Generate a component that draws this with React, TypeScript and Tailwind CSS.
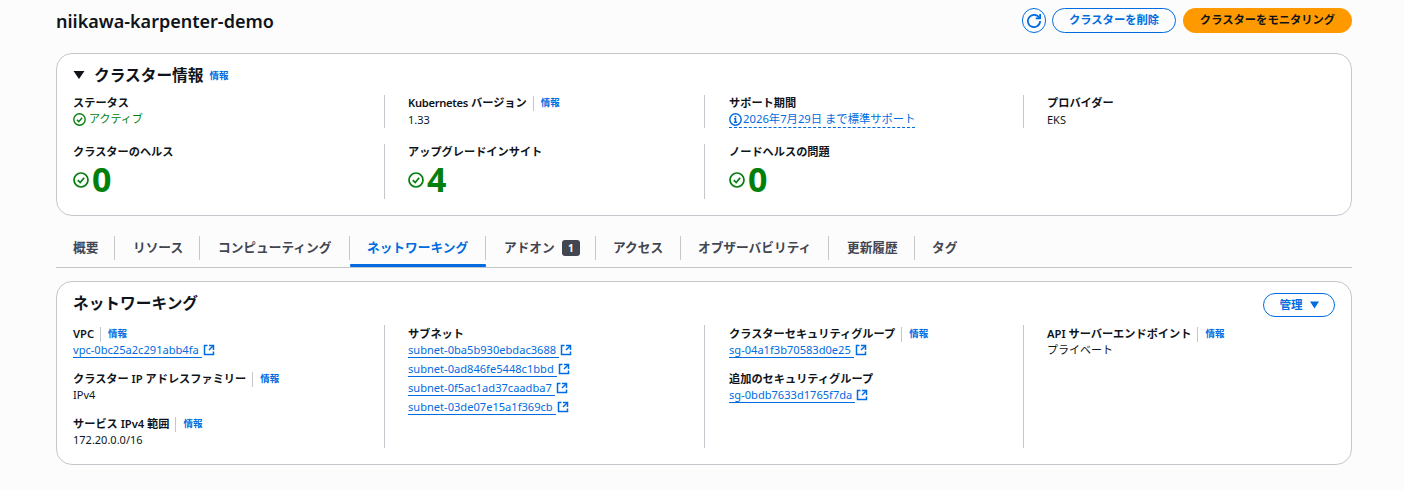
import type { ReactNode } from 'react'

const font = { fontFamily: '"Noto Sans", "Noto Sans CJK JP", sans-serif' }

const CheckIcon = ({ size }: { size: number }) => (
  <svg width={size} height={size} viewBox="0 0 16 16" fill="none" stroke="#037f0c" strokeWidth="1.7" className="shrink-0">
    <circle cx="8" cy="8" r="7" />
    <path d="M4.8 8.2 7.2 10.6 11.2 5.8" />
  </svg>
)

const ExternalIcon = () => (
  <svg width="12" height="12" viewBox="0 0 16 16" fill="none" stroke="#006ce0" strokeWidth="2" className="ml-px shrink-0">
    <path d="M14 8.01v-6H8" />
    <path d="M14.02 2 8 8" />
    <path d="M6 2H2v12h12v-4" />
  </svg>
)

const Info = () => <span className="text-[9.5px] font-semibold text-[#006ce0]">情報</span>

const Label = ({ children, info }: { children: ReactNode; info?: boolean }) => (
  <div className="flex h-[16px] items-center text-[11.2px] leading-[16px] font-semibold text-[#0f141a]">
    <span>{children}</span>
    {info && (
      <>
        <span className="mr-[7px] ml-[6px] h-[15px] w-px bg-[#c6c6cd]" />
        <Info />
      </>
    )}
  </div>
)

const Value = ({ children }: { children: ReactNode }) => (
  <div className="h-[16px] text-[11px] leading-[16px] text-[#0f141a]">{children}</div>
)

const ExtLink = ({ children }: { children: string }) => (
  <div className="flex h-[16px] items-center">
    <a className="border-b border-[#006ce0] pr-[3px] text-[11.1px] leading-[15px] whitespace-nowrap text-[#006ce0]">{children}</a>
    <ExternalIcon />
  </div>
)

const Stat = ({ value }: { value: string }) => (
  <div className="mt-[4px] flex h-[30px] items-center gap-[3px]">
    <span className="mt-[1px]"><CheckIcon size={16} /></span>
    <span className="text-[34px] leading-[30px] font-bold text-[#037f0c]">{value}</span>
  </div>
)

const tabs: { name: string; w: string; pl: string; active?: boolean; badge?: string }[] = [
  { name: '概要', w: 'w-[59px]', pl: 'pl-[17px]' },
  { name: 'リソース', w: 'w-[85px]', pl: 'pl-[18px]' },
  { name: 'コンピューティング', w: 'w-[150px]', pl: 'pl-[18px]' },
  { name: 'ネットワーキング', w: 'w-[136px]', pl: 'pl-[17px]', active: true },
  { name: 'アドオン', w: 'w-[110px]', pl: 'pl-[18px]', badge: '1' },
  { name: 'アクセス', w: 'w-[85px]', pl: 'pl-[17px]' },
  { name: 'オブザーバビリティ', w: 'w-[148px]', pl: 'pl-[17px]' },
  { name: '更新履歴', w: 'w-[86px]', pl: 'pl-[18px]' },
  { name: 'タグ', w: 'w-[60px]', pl: 'pl-[17px]' },
]

export default function App() {
  return (
    <div className="min-h-[490px] bg-[#fcfcfd] pt-[8px] pr-[52px] pl-[56px]" style={font}>
      {/* header */}
      <div className="flex h-[25px] items-center justify-between">
        <h1 className="mt-[2px] text-[18px] leading-[25px] font-semibold text-[#0f141a]">niikawa-karpenter-demo</h1>
        <div className="flex items-center">
          <button className="flex h-[25px] w-[24px] items-center justify-center rounded-full border border-[#006ce0]">
            <svg width="14" height="14" viewBox="0 0 16 16" fill="none" stroke="#006ce0" strokeWidth="2">
              <path d="M10 5h5V0" />
              <path d="M15 8a7 7 0 1 1-.67-3" />
            </svg>
          </button>
          <button className="ml-[6px] h-[25px] w-[124px] rounded-full border border-[#006ce0] text-[11.3px] font-bold text-[#006ce0]">クラスターを削除</button>
          <button className="ml-[7px] h-[25px] w-[169px] rounded-full bg-[#ff9900] text-[11.3px] font-bold text-[#0f141a]">クラスターをモニタリング</button>
        </div>
      </div>

      {/* cluster info */}
      <section className="mt-[20px] h-[163px] rounded-[16px] border border-[#c6c6cd] bg-white pt-[9px] pl-[16px]">
        <div className="flex h-[24px] items-center">
          <svg width="12" height="10" viewBox="0 0 12 10" className="mr-[9px]"><path d="M0.5 1h11L6 9z" fill="#0f141a" /></svg>
          <h2 className="text-[15.7px] leading-[24px] font-bold text-[#0f141a]">クラスター情報</h2>
          <span className="ml-[6px] flex h-[24px] items-center pt-[2px]"><Info /></span>
        </div>
        <div className="mt-[8px] grid grid-cols-[311px_320px_319px_1fr]">
          <div className="h-[33px]">
            <Label>ステータス</Label>
            <div className="flex h-[16px] items-center gap-[3px] text-[11px] text-[#037f0c]"><CheckIcon size={13} />アクティブ</div>
          </div>
          <div className="h-[33px] border-l border-[#c6c6cd] pl-[23px]">
            <Label info><span className="tracking-[-0.3px]">Kubernetes</span> バージョン</Label>
            <div className="mt-[1px]"><Value>1.33</Value></div>
          </div>
          <div className="h-[33px] border-l border-[#c6c6cd] pl-[24px]">
            <Label>サポート期間</Label>
            <div className="flex h-[17px] w-fit items-center gap-px border-b border-dashed border-[#006ce0] text-[11.3px] text-[#006ce0]">
              <svg width="13" height="13" viewBox="0 0 16 16" fill="none" stroke="#006ce0" strokeWidth="1.8">
                <circle cx="8" cy="8" r="7" />
                <path d="M8 11.5V7.2H6.2M10 11.5H6M8 5.6V3.6" />
              </svg>
              2026年7月29日 まで標準サポート
            </div>
          </div>
          <div className="h-[33px] border-l border-[#c6c6cd] pl-[23px]">
            <Label>プロバイダー</Label>
            <div className="mt-[1px]"><Value>EKS</Value></div>
          </div>
        </div>
        <div className="mt-[16px] grid grid-cols-[311px_320px_319px_1fr]">
          <div className="h-[55px]">
            <Label>クラスターのヘルス</Label>
            <Stat value="0" />
          </div>
          <div className="h-[55px] border-l border-[#c6c6cd] pl-[23px]">
            <Label>アップグレードインサイト</Label>
            <Stat value="4" />
          </div>
          <div className="h-[55px] border-l border-[#c6c6cd] pl-[24px]">
            <Label>ノードヘルスの問題</Label>
            <Stat value="0" />
          </div>
        </div>
      </section>

      {/* tabs */}
      <div className="mt-[20px] flex h-[32px] border-b border-[#c6c6cd]">
        {tabs.map((t, i) => (
          <div key={t.name} className={`relative flex h-[31px] items-start ${t.w}`}>
            <div className={`flex h-[24px] w-full items-center text-[12.7px] font-bold ${t.pl} ${i < tabs.length - 1 ? 'border-r border-[#c6c6cd]' : ''} ${t.active ? 'text-[#006ce0]' : 'text-[#424650]'}`}>
              {t.name}
              {t.badge && (
                <span className="ml-[7px] flex h-[16px] w-[18px] items-center justify-center rounded-[3px] bg-[#424650] text-[10px] text-white">{t.badge}</span>
              )}
            </div>
            {t.active && <div className="absolute right-0 bottom-0 left-0 h-[3px] rounded-[1px] bg-[#006ce0]" />}
          </div>
        ))}
      </div>

      {/* networking */}
      <section className="mt-[13px] h-[184px] rounded-[16px] border border-[#c6c6cd] bg-white pt-[7px] pr-[16px] pl-[16px]">
        <div className="flex h-[28px] items-center justify-between">
          <h2 className="text-[15.7px] leading-[28px] font-bold text-[#0f141a]">ネットワーキング</h2>
          <button className="mt-[3px] flex h-[24px] w-[72px] items-center justify-center gap-[7px] rounded-full border border-[#006ce0] text-[11.5px] font-bold text-[#006ce0]">
            管理
            <svg width="9" height="8" viewBox="0 0 9 8"><path d="M0 0.5h9L4.5 7.5z" fill="#006ce0" /></svg>
          </button>
        </div>
        <div className="mt-[8px] grid grid-cols-[311px_320px_319px_1fr]">
          <div className="h-[123px] pt-[1px]">
            <Label info>VPC</Label>
            <ExtLink>vpc-0bc25a2c291abb4fa</ExtLink>
            <div className="mt-[13px]"><Label info>クラスター IP アドレスファミリー</Label></div>
            <Value>IPv4</Value>
            <div className="mt-[13px]"><Label info>サービス IPv4 範囲</Label></div>
            <Value>172.20.0.0/16</Value>
          </div>
          <div className="h-[123px] border-l border-[#c6c6cd] pt-[1px] pl-[23px]">
            <Label>サブネット</Label>
            <div className="flex flex-col gap-[3px]">
              <ExtLink>subnet-0ba5b930ebdac3688</ExtLink>
              <ExtLink>subnet-0ad846fe5448c1bbd</ExtLink>
              <ExtLink>subnet-0f5ac1ad37caadba7</ExtLink>
              <ExtLink>subnet-03de07e15a1f369cb</ExtLink>
            </div>
          </div>
          <div className="h-[123px] border-l border-[#c6c6cd] pt-[1px] pl-[24px]">
            <Label info>クラスターセキュリティグループ</Label>
            <ExtLink>sg-04a1f3b70583d0e25</ExtLink>
            <div className="mt-[13px]"><Label>追加のセキュリティグループ</Label></div>
            <ExtLink>sg-0bdb7633d1765f7da</ExtLink>
          </div>
          <div className="h-[123px] border-l border-[#c6c6cd] pt-[1px] pl-[23px]">
            <Label info>API サーバーエンドポイント</Label>
            <Value>プライベート</Value>
          </div>
        </div>
      </section>
    </div>
  )
}
